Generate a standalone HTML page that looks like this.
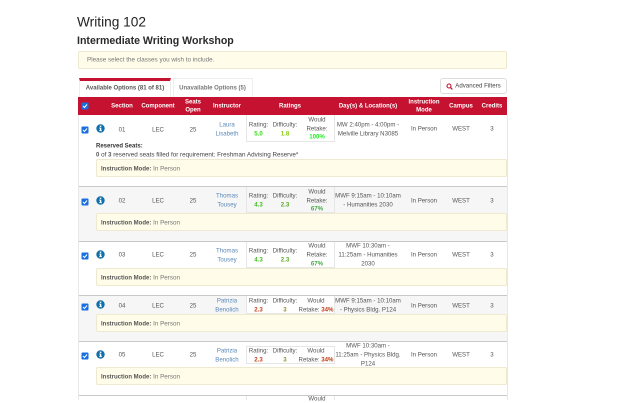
<!DOCTYPE html>
<html><head><meta charset="utf-8"><style>
html,body{margin:0;padding:0;background:#fff}
body{width:640px;height:400px;overflow:hidden;position:relative;font-family:"Liberation Sans",sans-serif;color:#555;filter:blur(.3px)}
.b{position:absolute;box-sizing:border-box}
.t{position:absolute;transform:translate(-50%,-40%);white-space:nowrap;font-size:6.1px;line-height:1;color:#555}
.l{position:absolute;transform:translateY(-40%);white-space:nowrap;font-size:6.3px;line-height:1;color:#555}
.w{color:#fff;font-weight:bold;font-size:6px}
.a{color:#5a88b8}
.s{font-weight:bold}
.l b{font-size:6px;color:#555}
.al{position:absolute;box-sizing:border-box;left:96px;width:411px;height:18px;background:#fffce9;border:1px solid #efe9cf;border-radius:2px}
svg{position:absolute}
</style></head><body>
<div class="l" style="left:77px;top:20.5px;font-size:13.7px;color:#222">Writing 102</div>
<div class="l" style="left:77px;top:39.5px;font-size:10.6px;font-weight:bold;color:#2a2a2a">Intermediate Writing Workshop</div>
<div class="b" style="left:78px;top:51px;width:429px;height:18px;background:#fffce9;border:1px solid #efe9cf;border-radius:2px"></div>
<div class="l" style="left:87px;top:60.2px;color:#777">Please select the classes you wish to include.</div>

<div class="b" style="left:79px;top:78px;width:92px;height:19px;background:#fff;border-top:3px solid #c41230;border-left:1px solid #eee;border-right:1px solid #eee"></div>
<div class="t s" style="left:125px;top:88px;font-size:6px;color:#555">Available Options (81 of 81)</div>
<div class="b" style="left:173px;top:78px;width:80px;height:19px;border:1px solid #eee;border-bottom:0"></div>
<div class="t" style="left:212.5px;top:88px;font-weight:bold;font-size:6px;color:#777">Unavailable Options (5)</div>
<div class="b" style="left:440px;top:78px;width:67px;height:16px;border:1px solid #ddd;border-radius:3px"></div>
<svg style="left:446px;top:82.5px" width="7" height="7" viewBox="0 0 7 7"><circle cx="3" cy="3" r="2" fill="none" stroke="#c41230" stroke-width="1.1"/><path d="M4.4 4.4L6.4 6.4" stroke="#c41230" stroke-width="1.2"/></svg>
<div class="t" style="left:478px;top:86px;color:#444">Advanced Filters</div>

<div class="b" style="left:78px;top:97px;width:429px;height:18px;background:#c41230"></div>
<svg style="left:81px;top:102px" width="8" height="8" viewBox="0 0 8 8"><rect x=".5" y=".5" width="7" height="7" rx="1" fill="#1a6fe0"/><path d="M2 4l1.5 1.5L6 2.5" fill="none" stroke="#fff" stroke-width="1"/></svg>
<div class="t w" style="left:122px;top:105.7px">Section</div>
<div class="t w" style="left:158px;top:105.7px">Component</div>
<div class="t w" style="left:193px;top:101.7px">Seats</div>
<div class="t w" style="left:193px;top:109.7px">Open</div>
<div class="t w" style="left:227px;top:105.7px">Instructor</div>
<div class="t w" style="left:290px;top:105.7px">Ratings</div>
<div class="t w" style="left:368px;top:105.7px">Day(s) &amp; Location(s)</div>
<div class="t w" style="left:424px;top:101.7px">Instruction</div>
<div class="t w" style="left:424px;top:109.7px">Mode</div>
<div class="t w" style="left:461px;top:105.7px">Campus</div>
<div class="t w" style="left:492px;top:105.7px">Credits</div>

<div class="b" style="left:78px;top:115px;width:1px;height:285px;background:#e8e8e8"></div>
<div class="b" style="left:507px;top:115px;width:1px;height:285px;background:#e8e8e8"></div>

<!-- row backgrounds -->
<div class="b" style="left:79px;top:186px;width:428px;height:56px;background:#f6f6f6;border-top:1px solid #c8c8c8;border-bottom:1px solid #c8c8c8"></div>
<div class="b" style="left:79px;top:295px;width:428px;height:47px;background:#f6f6f6;border-top:1px solid #c8c8c8;border-bottom:1px solid #c8c8c8"></div>
<div class="b" style="left:79px;top:395px;width:428px;height:1px;background:#c8c8c8"></div>

<!-- rating boxes -->
<div class="b" style="left:246px;top:115px;width:89px;height:27px;background:#fff;border:1px solid #e6e6e6;border-top:0"></div>
<div class="b" style="left:246px;top:187px;width:89px;height:26px;border:1px solid #e6e6e6;border-top:0"></div>
<div class="b" style="left:246px;top:242px;width:89px;height:26px;border:1px solid #e6e6e6;border-top:0"></div>
<div class="b" style="left:246px;top:296px;width:89px;height:18px;background:#fff;border:1px solid #e6e6e6;border-top:0"></div>
<div class="b" style="left:246px;top:346px;width:89px;height:18px;border:1px solid #e6e6e6"></div>
<div class="b" style="left:246px;top:396px;width:89px;height:4px;border-left:1px solid #e6e6e6;border-right:1px solid #e6e6e6"></div>

<!-- alerts -->
<div class="al" style="top:159px"></div>
<div class="al" style="top:213px"></div>
<div class="al" style="top:268px"></div>
<div class="al" style="top:314px"></div>
<div class="al" style="top:367px"></div>
<div class="l" style="left:101px;top:168.7px"><b>Instruction Mode:</b> <span style="color:#777">In Person</span></div>
<div class="l" style="left:101px;top:222.7px"><b>Instruction Mode:</b> <span style="color:#777">In Person</span></div>
<div class="l" style="left:101px;top:277.7px"><b>Instruction Mode:</b> <span style="color:#777">In Person</span></div>
<div class="l" style="left:101px;top:323.7px"><b>Instruction Mode:</b> <span style="color:#777">In Person</span></div>
<div class="l" style="left:101px;top:377.2px"><b>Instruction Mode:</b> <span style="color:#777">In Person</span></div>

<div class="l s" style="left:96px;top:146px;font-size:6px;color:#333">Reserved Seats:</div>
<div class="l" style="left:96px;top:154.5px;color:#444"><b>0</b> of <b>3</b> reserved seats filled for requirement: Freshman Advising Reserve*</div>

<!-- checkboxes & info icons -->
<svg style="left:81px;top:126px" width="8" height="8" viewBox="0 0 8 8"><rect x=".5" y=".5" width="7" height="7" rx="1" fill="#1a6fe0"/><path d="M2 4l1.5 1.5L6 2.5" fill="none" stroke="#fff" stroke-width="1"/></svg>
<svg style="left:81px;top:197.5px" width="8" height="8" viewBox="0 0 8 8"><rect x=".5" y=".5" width="7" height="7" rx="1" fill="#1a6fe0"/><path d="M2 4l1.5 1.5L6 2.5" fill="none" stroke="#fff" stroke-width="1"/></svg>
<svg style="left:81px;top:252px" width="8" height="8" viewBox="0 0 8 8"><rect x=".5" y=".5" width="7" height="7" rx="1" fill="#1a6fe0"/><path d="M2 4l1.5 1.5L6 2.5" fill="none" stroke="#fff" stroke-width="1"/></svg>
<svg style="left:81px;top:302.5px" width="8" height="8" viewBox="0 0 8 8"><rect x=".5" y=".5" width="7" height="7" rx="1" fill="#1a6fe0"/><path d="M2 4l1.5 1.5L6 2.5" fill="none" stroke="#fff" stroke-width="1"/></svg>
<svg style="left:81px;top:352px" width="8" height="8" viewBox="0 0 8 8"><rect x=".5" y=".5" width="7" height="7" rx="1" fill="#1a6fe0"/><path d="M2 4l1.5 1.5L6 2.5" fill="none" stroke="#fff" stroke-width="1"/></svg>

<svg style="left:95.5px;top:123.5px" width="9" height="9" viewBox="0 0 9 9"><circle cx="4.5" cy="4.5" r="4.2" fill="#0f6fa8"/><rect x="3.8" y="1.6" width="1.5" height="1.4" fill="#fff"/><path d="M3.2 3.6h2.1v2.6h.6v.9H3.2v-.9h.7V4.5h-.7z" fill="#fff"/></svg>
<svg style="left:95.5px;top:195.5px" width="9" height="9" viewBox="0 0 9 9"><circle cx="4.5" cy="4.5" r="4.2" fill="#0f6fa8"/><rect x="3.8" y="1.6" width="1.5" height="1.4" fill="#fff"/><path d="M3.2 3.6h2.1v2.6h.6v.9H3.2v-.9h.7V4.5h-.7z" fill="#fff"/></svg>
<svg style="left:95.5px;top:250px" width="9" height="9" viewBox="0 0 9 9"><circle cx="4.5" cy="4.5" r="4.2" fill="#0f6fa8"/><rect x="3.8" y="1.6" width="1.5" height="1.4" fill="#fff"/><path d="M3.2 3.6h2.1v2.6h.6v.9H3.2v-.9h.7V4.5h-.7z" fill="#fff"/></svg>
<svg style="left:95.5px;top:300px" width="9" height="9" viewBox="0 0 9 9"><circle cx="4.5" cy="4.5" r="4.2" fill="#0f6fa8"/><rect x="3.8" y="1.6" width="1.5" height="1.4" fill="#fff"/><path d="M3.2 3.6h2.1v2.6h.6v.9H3.2v-.9h.7V4.5h-.7z" fill="#fff"/></svg>
<svg style="left:95.5px;top:350px" width="9" height="9" viewBox="0 0 9 9"><circle cx="4.5" cy="4.5" r="4.2" fill="#0f6fa8"/><rect x="3.8" y="1.6" width="1.5" height="1.4" fill="#fff"/><path d="M3.2 3.6h2.1v2.6h.6v.9H3.2v-.9h.7V4.5h-.7z" fill="#fff"/></svg>

<!-- row 1 -->
<div class="t" style="left:122px;top:129.6px">01</div><div class="t" style="left:158px;top:129.6px">LEC</div><div class="t" style="left:193px;top:129.6px">25</div>
<div class="t a" style="left:227px;top:124.5px">Laura</div><div class="t a" style="left:227px;top:133.5px">Lisabeth</div>
<div class="t" style="left:258.5px;top:124.5px">Rating:</div><div class="t s" style="left:258.5px;top:133.5px;color:#33dd11">5.0</div>
<div class="t" style="left:285px;top:124.5px">Difficulty:</div><div class="t s" style="left:285px;top:133.5px;color:#88cc11">1.8</div>
<div class="t" style="left:317px;top:120px">Would</div><div class="t" style="left:317px;top:128.5px">Retake:</div><div class="t s" style="left:317px;top:137px;color:#22ee22">100%</div>
<div class="t" style="left:368px;top:124.5px">MW 2:40pm - 4:00pm -</div><div class="t" style="left:368px;top:133.5px">Melville Library N3085</div>
<div class="t" style="left:424px;top:129px">In Person</div><div class="t" style="left:461px;top:129px">WEST</div><div class="t" style="left:492px;top:129px">3</div>

<!-- row 2 -->
<div class="t" style="left:122px;top:200.5px">02</div><div class="t" style="left:158px;top:200.5px">LEC</div><div class="t" style="left:193px;top:200.5px">25</div>
<div class="t a" style="left:227px;top:196px">Thomas</div><div class="t a" style="left:227px;top:205px">Tousey</div>
<div class="t" style="left:258.5px;top:196px">Rating:</div><div class="t s" style="left:258.5px;top:205px;color:#44bb22">4.3</div>
<div class="t" style="left:285px;top:196px">Difficulty:</div><div class="t s" style="left:285px;top:205px;color:#55aa22">2.3</div>
<div class="t" style="left:317px;top:191.5px">Would</div><div class="t" style="left:317px;top:200.5px">Retake:</div><div class="t s" style="left:317px;top:209px;color:#44aa44">67%</div>
<div class="t" style="left:368px;top:196px">MWF 9:15am - 10:10am</div><div class="t" style="left:368px;top:205px">- Humanities 2030</div>
<div class="t" style="left:424px;top:200.5px">In Person</div><div class="t" style="left:461px;top:200.5px">WEST</div><div class="t" style="left:492px;top:200.5px">3</div>

<!-- row 3 -->
<div class="t" style="left:122px;top:255px">03</div><div class="t" style="left:158px;top:255px">LEC</div><div class="t" style="left:193px;top:255px">25</div>
<div class="t a" style="left:227px;top:250.5px">Thomas</div><div class="t a" style="left:227px;top:259.5px">Tousey</div>
<div class="t" style="left:258.5px;top:250.5px">Rating:</div><div class="t s" style="left:258.5px;top:259.5px;color:#44bb22">4.3</div>
<div class="t" style="left:285px;top:250.5px">Difficulty:</div><div class="t s" style="left:285px;top:259.5px;color:#55aa22">2.3</div>
<div class="t" style="left:317px;top:246px">Would</div><div class="t" style="left:317px;top:255px">Retake:</div><div class="t s" style="left:317px;top:263.5px;color:#44aa44">67%</div>
<div class="t" style="left:368px;top:246px">MWF 10:30am -</div><div class="t" style="left:368px;top:255px">11:25am - Humanities</div><div class="t" style="left:368px;top:263.5px">2030</div>
<div class="t" style="left:424px;top:255px">In Person</div><div class="t" style="left:461px;top:255px">WEST</div><div class="t" style="left:492px;top:255px">3</div>

<!-- row 4 -->
<div class="t" style="left:122px;top:305.5px">04</div><div class="t" style="left:158px;top:305.5px">LEC</div><div class="t" style="left:193px;top:305.5px">25</div>
<div class="t a" style="left:227px;top:300.5px">Patrizia</div><div class="t a" style="left:227px;top:309.5px">Benolich</div>
<div class="t" style="left:258.5px;top:300.5px">Rating:</div><div class="t s" style="left:258.5px;top:309.5px;color:#c8401a">2.3</div>
<div class="t" style="left:285px;top:300.5px">Difficulty:</div><div class="t s" style="left:285px;top:309.5px;color:#8f8f22">3</div>
<div class="t" style="left:316px;top:300.5px">Would</div><div class="t" style="left:316px;top:309.5px">Retake: <b style="color:#c03a10">34%</b></div>
<div class="t" style="left:368px;top:300.5px">MWF 9:15am - 10:10am</div><div class="t" style="left:368px;top:309.5px">- Physics Bldg. P124</div>
<div class="t" style="left:424px;top:305.5px">In Person</div><div class="t" style="left:461px;top:305.5px">WEST</div><div class="t" style="left:492px;top:305.5px">3</div>

<!-- row 5 -->
<div class="t" style="left:122px;top:355px">05</div><div class="t" style="left:158px;top:355px">LEC</div><div class="t" style="left:193px;top:355px">25</div>
<div class="t a" style="left:227px;top:350.5px">Patrizia</div><div class="t a" style="left:227px;top:359.5px">Benolich</div>
<div class="t" style="left:258.5px;top:350.5px">Rating:</div><div class="t s" style="left:258.5px;top:359.5px;color:#c8401a">2.3</div>
<div class="t" style="left:285px;top:350.5px">Difficulty:</div><div class="t s" style="left:285px;top:359.5px;color:#8f8f22">3</div>
<div class="t" style="left:316px;top:350.5px">Would</div><div class="t" style="left:316px;top:359.5px">Retake: <b style="color:#c03a10">34%</b></div>
<div class="t" style="left:368px;top:346px">MWF 10:30am -</div><div class="t" style="left:368px;top:355px">11:25am - Physics Bldg.</div><div class="t" style="left:368px;top:363.5px">P124</div>
<div class="t" style="left:424px;top:355px">In Person</div><div class="t" style="left:461px;top:355px">WEST</div><div class="t" style="left:492px;top:355px">3</div>

<!-- row 6 cut off -->
<div class="t" style="left:317px;top:399px">Would</div>
</body></html>
